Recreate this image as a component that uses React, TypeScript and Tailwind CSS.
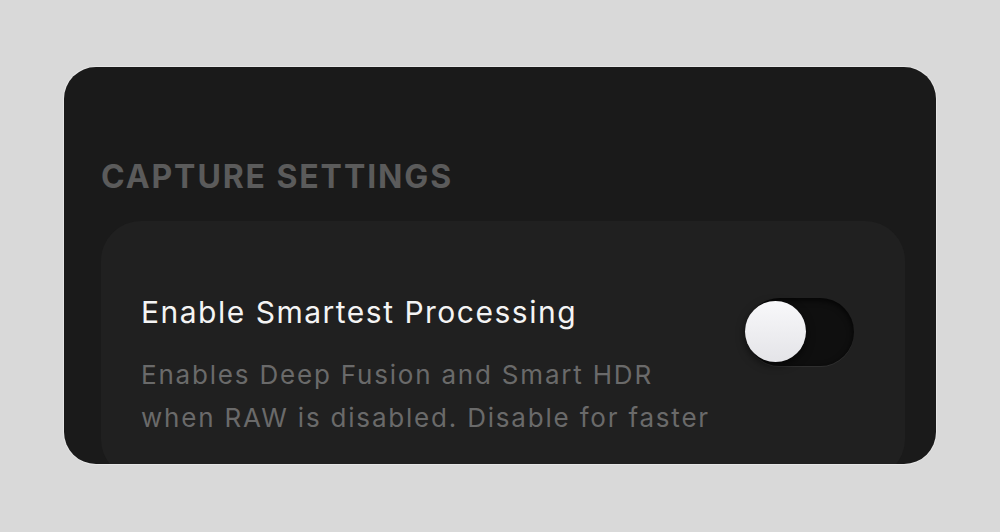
import React from "react";

export default function App() {
  return (
    <div
      className="w-[1000px] h-[532px] bg-[#d9d9d9] flex items-start justify-center pt-[67px]"
      style={{ fontFamily: "Inter, 'Noto Sans', sans-serif" }}
    >
      <div className="w-[872px] h-[397px] rounded-[32px] bg-[#1a1a1a] overflow-hidden shadow-[0_0_0_1px_rgba(255,255,255,0.35)] pl-[37px] pr-[31px]">
        <div className="pt-[90px] text-[32px] leading-[40px] font-bold tracking-[1.9px] text-[#5b5b5b]">
          CAPTURE SETTINGS
        </div>
        <div className="mt-[24px] rounded-[40px] bg-[#202020] pl-[40px] pr-[51px] pt-[72px] pb-[40px] flex items-start gap-[20px]">
          <div className="flex-1 min-w-0">
            <div className="text-[30px] leading-[38px] tracking-[1.5px] text-[#f4f4f4]">
              Enable Smartest Processing
            </div>
            <div className="mt-[22px] text-[26px] leading-[43px] tracking-[1.8px] text-[#6a6a6a] whitespace-nowrap">
              <div>Enables Deep Fusion and Smart HDR</div>
              <div>when RAW is disabled. Disable for faster</div>
            </div>
          </div>
          <div className="mt-[5px] relative w-[108px] h-[68px] rounded-full bg-[#0f0f0f] shadow-[inset_0_2px_6px_rgba(0,0,0,0.8),0_1px_0_rgba(255,255,255,0.07)] shrink-0">
            <div className="absolute left-[-1px] top-[3px] w-[61px] h-[61px] rounded-full bg-gradient-to-b from-[#f8f8fa] to-[#e4e4e8] shadow-[0_3px_8px_rgba(0,0,0,0.6)]" />
          </div>
        </div>
      </div>
    </div>
  );
}
